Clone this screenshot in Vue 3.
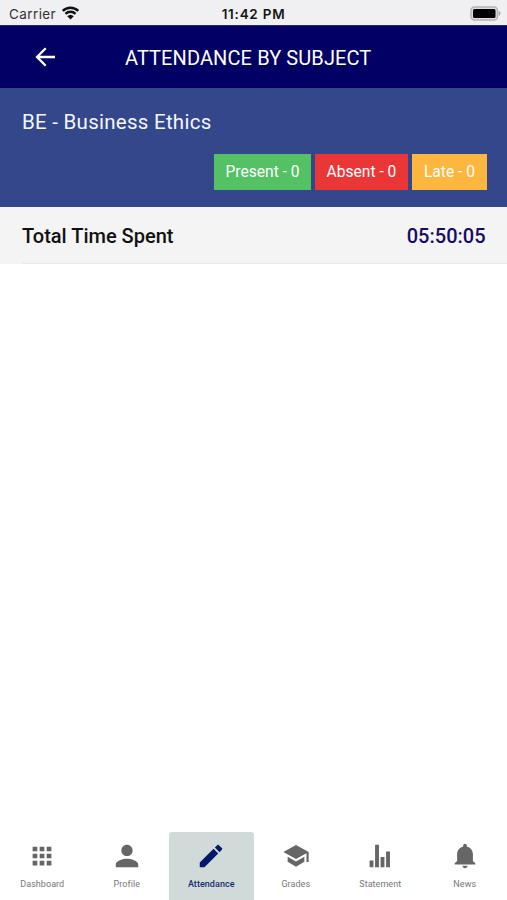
<script setup>
const tabs = [
  { label: 'Dashboard', d: 'M96 96h80v80H96zM216 96h80v80h-80zM336 96h80v80h-80zM96 216h80v80H96zM216 216h80v80h-80zM336 216h80v80h-80zM96 336h80v80H96zM216 336h80v80h-80zM336 336h80v80h-80z' },
  { label: 'Profile', d: 'M256 256c52.8 0 96-43.2 96-96s-43.2-96-96-96-96 43.2-96 96 43.2 96 96 96zm0 48c-63.6 0-192 32.4-192 96v48h384v-48c0-63.6-128.4-96-192-96z' },
  { label: 'Attendance', active: true, d: 'M64 368v80h80l235.7-235.7-80-80L64 368zm377.6-217.6c8.5-8.5 8.5-21.3 0-29.9l-50.1-50.1c-8.5-8.5-21.3-8.5-29.9 0l-39.5 39.5 80 80 39.5-39.5z' },
  { label: 'Grades', d: 'M256 68L40 188l216 118 179-98v150h37V188L256 68zM113 268v84l143 88 143-88v-84l-143 80z' },
  { label: 'Statement', d: 'M78 334h66v114H78zM172 64h66v384h-66zM266 274h66v174h-66zM360 178h66v270h-66z' },
  { label: 'News', d: 'M256 464c22.8 0 41.4-18.7 41.4-41.6h-82.8c0 22.9 18.6 41.6 41.4 41.6zm134.6-124.8V224.8c0-63.4-44.5-117.5-103.5-131V79.2c0-17.7-13.5-31.2-31.1-31.2s-31.1 13.5-31.1 31.2v14.6c-59 13.5-103.5 67.6-103.5 131v114.4L80 380.8v20.8h352v-20.8l-41.4-41.6z' },
]
</script>

<template>
  <div class="screen">
    <div class="status">
      <div class="carrier">
        <span>Carrier</span>
        <svg class="wifi" viewBox="0 0 18 14">
          <path d="M1.2 4.8a11.2 11.2 0 0 1 15.6 0M4 7.8a7.2 7.2 0 0 1 10 0" fill="none" stroke="#111" stroke-width="2.5" />
          <path d="M5.7 10.2a4.8 4.8 0 0 1 6.6 0L9 13.6z" fill="#111" />
        </svg>
      </div>
      <span class="clock">11:42 PM</span>
      <svg class="battery" viewBox="0 0 31 15">
        <rect x="1" y="1" width="26.5" height="13" rx="3.5" fill="#ddd" stroke="#b2b2b2" stroke-width="1.4" />
        <rect x="3" y="3" width="22.5" height="9" rx="1.5" fill="#000" />
        <path d="M28.7 5c2.4 1 2.4 4 0 5z" fill="#aaa" />
      </svg>
    </div>
    <header class="header">
      <svg class="back" viewBox="0 0 20 20">
        <path d="M19.5 10H2M10.2 1.2L1.5 10l8.7 8.8" fill="none" stroke="#fff" stroke-width="2.3" />
      </svg>
      <h1 class="title">ATTENDANCE BY SUBJECT</h1>
    </header>
    <section class="subject">
      <h2 class="name">BE - Business Ethics</h2>
      <div class="badges">
        <span class="badge present">Present - 0</span>
        <span class="badge absent">Absent - 0</span>
        <span class="badge late">Late - 0</span>
      </div>
    </section>
    <div class="total">
      <div class="total-inner">
        <span class="total-label">Total Time Spent</span>
        <span class="time">05:50:05</span>
      </div>
    </div>
    <main class="content"></main>
    <nav class="tabs">
      <div v-for="tab in tabs" :key="tab.label" class="tab" :class="{ active: tab.active }">
        <svg class="icon" viewBox="0 0 512 512"><path :d="tab.d" /></svg>
        <span class="label">{{ tab.label }}</span>
      </div>
    </nav>
  </div>
</template>

<style>
body { margin: 0; background: #fff; }
</style>

<style scoped>
.screen { display: flex; flex-direction: column; height: 900px; font-family: Roboto, sans-serif; background: #fff; overflow: hidden; }
.status { display: grid; grid-template-columns: 1fr auto 1fr; align-items: center; height: 25px; padding: 2px 6px 0 9px; box-sizing: border-box; background: #f0f0f3; font-family: Inter, sans-serif; color: #151515; }
.carrier { display: flex; align-items: center; gap: 5px; font-size: 13.5px; letter-spacing: .4px; color: #333; }
.wifi { width: 19px; height: 14px; margin-top: -2px; }
.clock { font-size: 13.5px; font-weight: 600; letter-spacing: .75px; margin-right: 3px; }
.battery { width: 31px; height: 15px; justify-self: end; }
.header { display: flex; align-items: center; height: 63px; padding-left: 35px; background: #020063; color: #fff; border-top: 1px solid #27256f; box-sizing: border-box; }
.back { width: 21px; height: 20px; margin-top: -1px; }
.title { margin: 1px 0 0 69px; font-size: 20px; line-height: 24px; font-weight: 400; letter-spacing: .1px; white-space: nowrap; }
.subject { height: 119px; padding: 21px 20px 0 22px; box-sizing: border-box; background: #34478b; color: #f4f6ff; }
.name { margin: 0; font-size: 20.5px; line-height: 27px; font-weight: 400; letter-spacing: .26px; }
.badges { display: flex; justify-content: flex-end; gap: 4px; margin-top: 17.5px; }
.badge { display: flex; align-items: center; justify-content: center; height: 36px; padding-top: 1px; box-sizing: border-box; font-size: 15.6px; color: #fff; white-space: nowrap; }
.present { width: 97px; background: #54c264; }
.absent { width: 93px; background: #eb3638; }
.late { width: 75px; background: #fdb63e; }
.total { height: 57px; padding-left: 22px; box-sizing: border-box; background: #f4f4f4; }
.total-inner { display: flex; align-items: center; justify-content: space-between; height: 57px; padding: 2px 21.5px 0 0; border-bottom: 1px solid #e9e9e9; box-sizing: border-box; font-size: 20px; font-weight: 500; color: #111; }
.time { color: #160c68; }
.content { flex: 1; }
.tabs { display: flex; height: 68px; }
.tab { display: flex; flex: 1; flex-direction: column; align-items: center; padding-top: 9px; box-sizing: border-box; color: #666; }
.active { background: #d0dad8; border-radius: 3px 3px 0 0; color: #051968; }
.icon { width: 30px; height: 30px; fill: currentColor; }
.label { margin-top: 7px; font-size: 9px; line-height: 12px; letter-spacing: .05px; color: #777; }
.active .label { font-weight: 500; color: #1b2c70; }
</style>
